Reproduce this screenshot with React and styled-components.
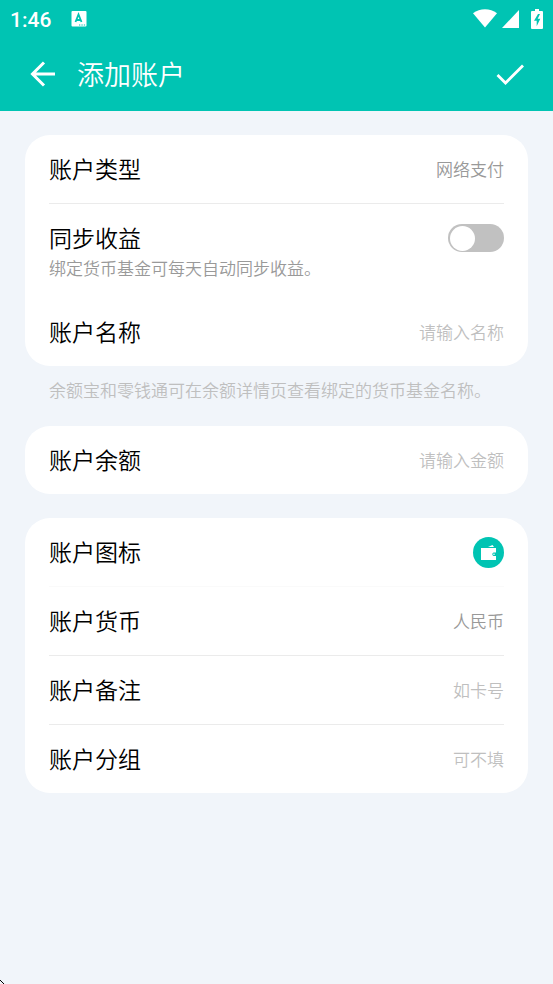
import React, { useState } from "react";
import styled, { createGlobalStyle } from "styled-components";

const GlobalStyle = createGlobalStyle`
  * { box-sizing: border-box; }
  body {
    margin: 0;
    background: #f1f5fa;
    font-family: Roboto, "Noto Sans CJK SC", sans-serif;
    font-weight: 350;
  }
  button, input { font-family: inherit; font-weight: inherit; }
`;

const Screen = styled.div`
  min-height: 100vh;
  background: #f1f5fa;
`;

const TopArea = styled.header`
  background: #00c4b3;
  color: #fff;
`;

const StatusBar = styled.div`
  display: flex;
  align-items: center;
  height: 37px;
  padding: 0 10px;
`;

const Clock = styled.span`
  margin-right: 20px;
  padding-top: 2px;
  font-size: 21px;
  line-height: 24px;
  font-weight: 500;
`;

const StatusIcons = styled.div`
  display: flex;
  align-items: center;
  gap: 5px;
  margin-left: auto;
`;

const Battery = styled.svg`
  margin-left: 7px;
`;

const TitleBar = styled.div`
  display: flex;
  align-items: center;
  height: 74px;
  padding: 0 25px;
`;

const Title = styled.h1`
  flex: 1;
  margin: 0 0 0 16px;
  padding-top: 4px;
  font-size: 27px;
  line-height: 40px;
  font-weight: inherit;
`;

const IconButton = styled.button`
  display: flex;
  padding: 0;
  border: 0;
  background: none;
  color: inherit;
  cursor: pointer;
`;

const Content = styled.main`
  display: flex;
  flex-direction: column;
  padding: 24px 25px;
`;

const Card = styled.section`
  padding: 0 24px;
  border-radius: 25px;
  background: #fff;
  & + & { margin-top: 24px; }
`;

const Row = styled.div`
  display: flex;
  align-items: center;
  justify-content: space-between;
  gap: 16px;
  height: 68px;
`;

const Divider = styled.hr`
  height: 1px;
  margin: 0;
  border: 0;
  background: ${(p) => (p.$faint ? "#fafafa" : "#ebebeb")};
`;

const SyncGroup = styled.div`
  height: 94px;
`;

const Label = styled.label`
  flex-shrink: 0;
  padding-top: 4px;
  color: #000;
  font-size: 23px;
  line-height: 34px;
`;

const ValueButton = styled.button`
  padding: 2px 0 0;
  border: 0;
  background: none;
  color: #999;
  font-size: 17px;
  line-height: 26px;
  cursor: pointer;
`;

const Field = styled.input`
  flex: 1;
  min-width: 0;
  padding: 2px 0 0;
  border: 0;
  outline: 0;
  background: none;
  color: #999;
  font-size: 17px;
  line-height: 26px;
  text-align: right;
  &::placeholder { color: #bfbfbf; opacity: 1; }
`;

const Note = styled.p`
  margin: 0;
  font-size: 17px;
  line-height: 26px;
`;

const SyncNote = styled(Note)`
  margin-top: -16px;
  color: #999;
`;

const CardNote = styled(Note)`
  padding: 12px 24px 22px;
  color: #bfbfbf;
`;

const Switch = styled.input`
  display: flex;
  align-items: center;
  appearance: none;
  width: 56px;
  height: 28px;
  margin: 0;
  padding: 0 2px;
  border-radius: 14px;
  background: #c1c1c1;
  cursor: pointer;
  &::before {
    content: "";
    width: 25px;
    height: 25px;
    border-radius: 50%;
    background: #fff;
  }
  &:checked {
    justify-content: flex-end;
    background: #00c4b3;
  }
`;

const WalletButton = styled(IconButton)`
  align-items: center;
  justify-content: center;
  width: 31px;
  height: 31px;
  border-radius: 50%;
  background: #00c4b3;
`;

const ScreenCorner = styled.svg`
  position: fixed;
  left: 0;
  bottom: 0;
`;

function TextRow({ id, label, placeholder }) {
  return (
    <Row>
      <Label htmlFor={id}>{label}</Label>
      <Field id={id} type="text" placeholder={placeholder} />
    </Row>
  );
}

function ChoiceRow({ id, label, value }) {
  return (
    <Row>
      <Label htmlFor={id}>{label}</Label>
      <ValueButton id={id} type="button">{value}</ValueButton>
    </Row>
  );
}

export default function App() {
  const [sync, setSync] = useState(false);
  return (
    <Screen>
      <GlobalStyle />
      <TopArea>
        <StatusBar>
          <Clock>1:46</Clock>
          <svg width="16" height="16" viewBox="0 0 16 16" aria-hidden="true">
            <rect x="0.5" y="0" width="15" height="15.500" rx="1" fill="#fff" />
            <path d="M4.500 11 7.500 3.500 10.500 11M5.500 9h4" fill="none" stroke="#00c4b3" strokeWidth="1.800" />
            <path d="M8 14h1.300M10.400 14h1.300M12.800 14h1.300" stroke="#00c4b3" strokeWidth="1.200" />
          </svg>
          <StatusIcons>
            <svg width="24" height="19" viewBox="0 0 24 19" aria-hidden="true">
              <path d="M0 4.300C7-1.100 17-1.100 24 4.300L12 18.500Z" fill="#fff" />
            </svg>
            <svg width="17" height="18" viewBox="0 0 17 18" aria-hidden="true">
              <path d="M17 0V18H0Z" fill="#fff" />
            </svg>
            <Battery width="12" height="20" viewBox="0 0 12 20" aria-hidden="true">
              <path d="M0 3a1 1 0 0 1 1-1H4V0H8V2H11a1 1 0 0 1 1 1V19a1 1 0 0 1-1 1H1a1 1 0 0 1-1-1Z" fill="#fff" />
              <path d="M7 5 3 11.800H5.700V17.300L9.300 9.800H6.700L9 5Z" fill="#00c4b3" />
            </Battery>
          </StatusIcons>
        </StatusBar>
        <TitleBar>
          <IconButton type="button" aria-label="返回">
            <svg width="36" height="36" viewBox="0 0 36 36" fill="none" stroke="#fff" strokeWidth="3">
              <path d="M30 18H8M19 6.500 7.500 18 19 29.500" />
            </svg>
          </IconButton>
          <Title>添加账户</Title>
          <IconButton type="button" aria-label="保存">
            <svg width="36" height="36" viewBox="0 0 36 36" fill="none" stroke="#fff" strokeWidth="2.800">
              <path d="M5.500 19 13.500 27 31 9.500" />
            </svg>
          </IconButton>
        </TitleBar>
      </TopArea>

      <Content>
        <Card>
          <ChoiceRow id="type" label="账户类型" value="网络支付" />
          <Divider />
          <SyncGroup>
            <Row>
              <Label htmlFor="sync">同步收益</Label>
              <Switch
                id="sync"
                type="checkbox"
                role="switch"
                aria-describedby="sync-note"
                checked={sync}
                onChange={(e) => setSync(e.target.checked)}
              />
            </Row>
            <SyncNote id="sync-note">绑定货币基金可每天自动同步收益。</SyncNote>
          </SyncGroup>
          <TextRow id="name" label="账户名称" placeholder="请输入名称" />
        </Card>
        <CardNote>余额宝和零钱通可在余额详情页查看绑定的货币基金名称。</CardNote>
        <Card>
          <TextRow id="balance" label="账户余额" placeholder="请输入金额" />
        </Card>
        <Card>
          <Row>
            <Label htmlFor="icon">账户图标</Label>
            <WalletButton id="icon" type="button">
              <svg width="15" height="15" viewBox="0 0 15 15" aria-hidden="true">
                <path d="M0 3H15V7.500H12.500a1.800 1.800 0 0 0 0 3.400H15V15H0Z" fill="#fff" />
                <path d="M7 2 11.500 0 13 2Z" fill="#fff" />
                <circle cx="13" cy="9.200" r="0.800" fill="#fff" />
              </svg>
            </WalletButton>
          </Row>
          <Divider $faint />
          <ChoiceRow id="currency" label="账户货币" value="人民币" />
          <Divider />
          <TextRow id="remark" label="账户备注" placeholder="如卡号" />
          <Divider />
          <TextRow id="group" label="账户分组" placeholder="可不填" />
        </Card>
      </Content>
      <ScreenCorner width="4" height="4" viewBox="0 0 4 4" aria-hidden="true">
        <path d="M0 0 4 4" stroke="#000" />
      </ScreenCorner>
    </Screen>
  );
}
